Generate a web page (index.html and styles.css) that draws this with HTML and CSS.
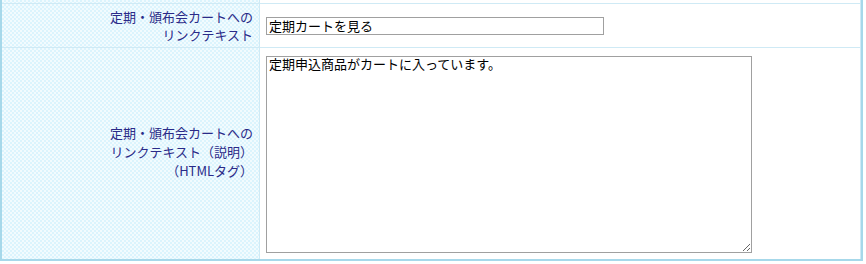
FILE: index.html
```html
<!DOCTYPE html>
<html lang="ja">
<head>
    <meta charset="UTF-8">
    <title>定期・頒布会カート設定</title>
    <link rel="stylesheet" href="styles.css">
</head>
<body>
    <div class="form-box">
        <!-- previous row (cut off) -->
        <div class="row row-cut">
            <div class="label"></div>
            <div class="value"></div>
        </div>

        <div class="row">
            <div class="label">定期・頒布会カートへの<br>リンクテキスト</div>
            <div class="value value-middle">
                <input class="text-input" type="text" value="定期カートを見る">
            </div>
        </div>

        <div class="row row-last">
            <div class="label">定期・頒布会カートへの<br>リンクテキスト（説明）<br>（HTMLタグ）</div>
            <div class="value value-top">
                <textarea class="text-area">定期申込商品がカートに入っています。</textarea>
            </div>
        </div>
    </div>
</body>
</html>
```

FILE: styles.css
```css
:root {
    --border-outer: #a6d8ea;
    --border-inner: #cfeaf5;
    --label-color: #2a2a88;
    --dot-color: #dbf4fd;
    --label-bg: #f2fbfe;
    --font-jp: "Noto Sans CJK JP", "Noto Sans", sans-serif;
}

body {
    margin: 0;
    padding: 0;
    background: #fff;
    font-family: var(--font-jp);
    font-size: 13px;
}

.form-box {
    width: 859px;
    border-left: 2px solid var(--border-outer);
    border-right: 2px solid var(--border-outer);
    border-bottom: 2px solid var(--border-outer);
}

.row {
    display: grid;
    grid-template-columns: 258px 1fr;
    border-top: 1px solid var(--border-inner);
}

.row-cut {
    height: 3px;
    border-top: none;
}

.label {
    display: flex;
    align-items: center;
    justify-content: flex-end;
    text-align: right;
    padding: 0 6px;
    color: var(--label-color);
    line-height: 18px;
    border-right: 1px solid var(--border-inner);
    background-color: var(--label-bg);
    background-image:
        linear-gradient(45deg, var(--dot-color) 25%, transparent 25%, transparent 75%, var(--dot-color) 75%),
        linear-gradient(45deg, var(--dot-color) 25%, transparent 25%, transparent 75%, var(--dot-color) 75%);
    background-size: 4px 4px;
    background-position: 0 0, 2px 2px;
}

.row-last .label {
    line-height: 19px;
    padding-bottom: 4px;
}

.value {
    padding: 0 6px;
    border-right: 1px solid var(--border-inner);
}

.value-middle {
    display: flex;
    align-items: center;
    height: 43px;
}

.value-top {
    padding: 8px 6px 6px;
}

.text-input {
    box-sizing: border-box;
    width: 338px;
    height: 18px;
    margin: 0;
    padding: 0 2px;
    border: 1px solid #a0a0a0;
    font-family: var(--font-jp);
    font-size: 13px;
    color: #000;
    outline: none;
}

.text-area {
    display: block;
    box-sizing: border-box;
    width: 486px;
    height: 197px;
    margin: 0;
    padding: 0 2px;
    border: 1px solid #a0a0a0;
    font-family: var(--font-jp);
    font-size: 13px;
    line-height: 14px;
    color: #000;
    outline: none;
}
```
